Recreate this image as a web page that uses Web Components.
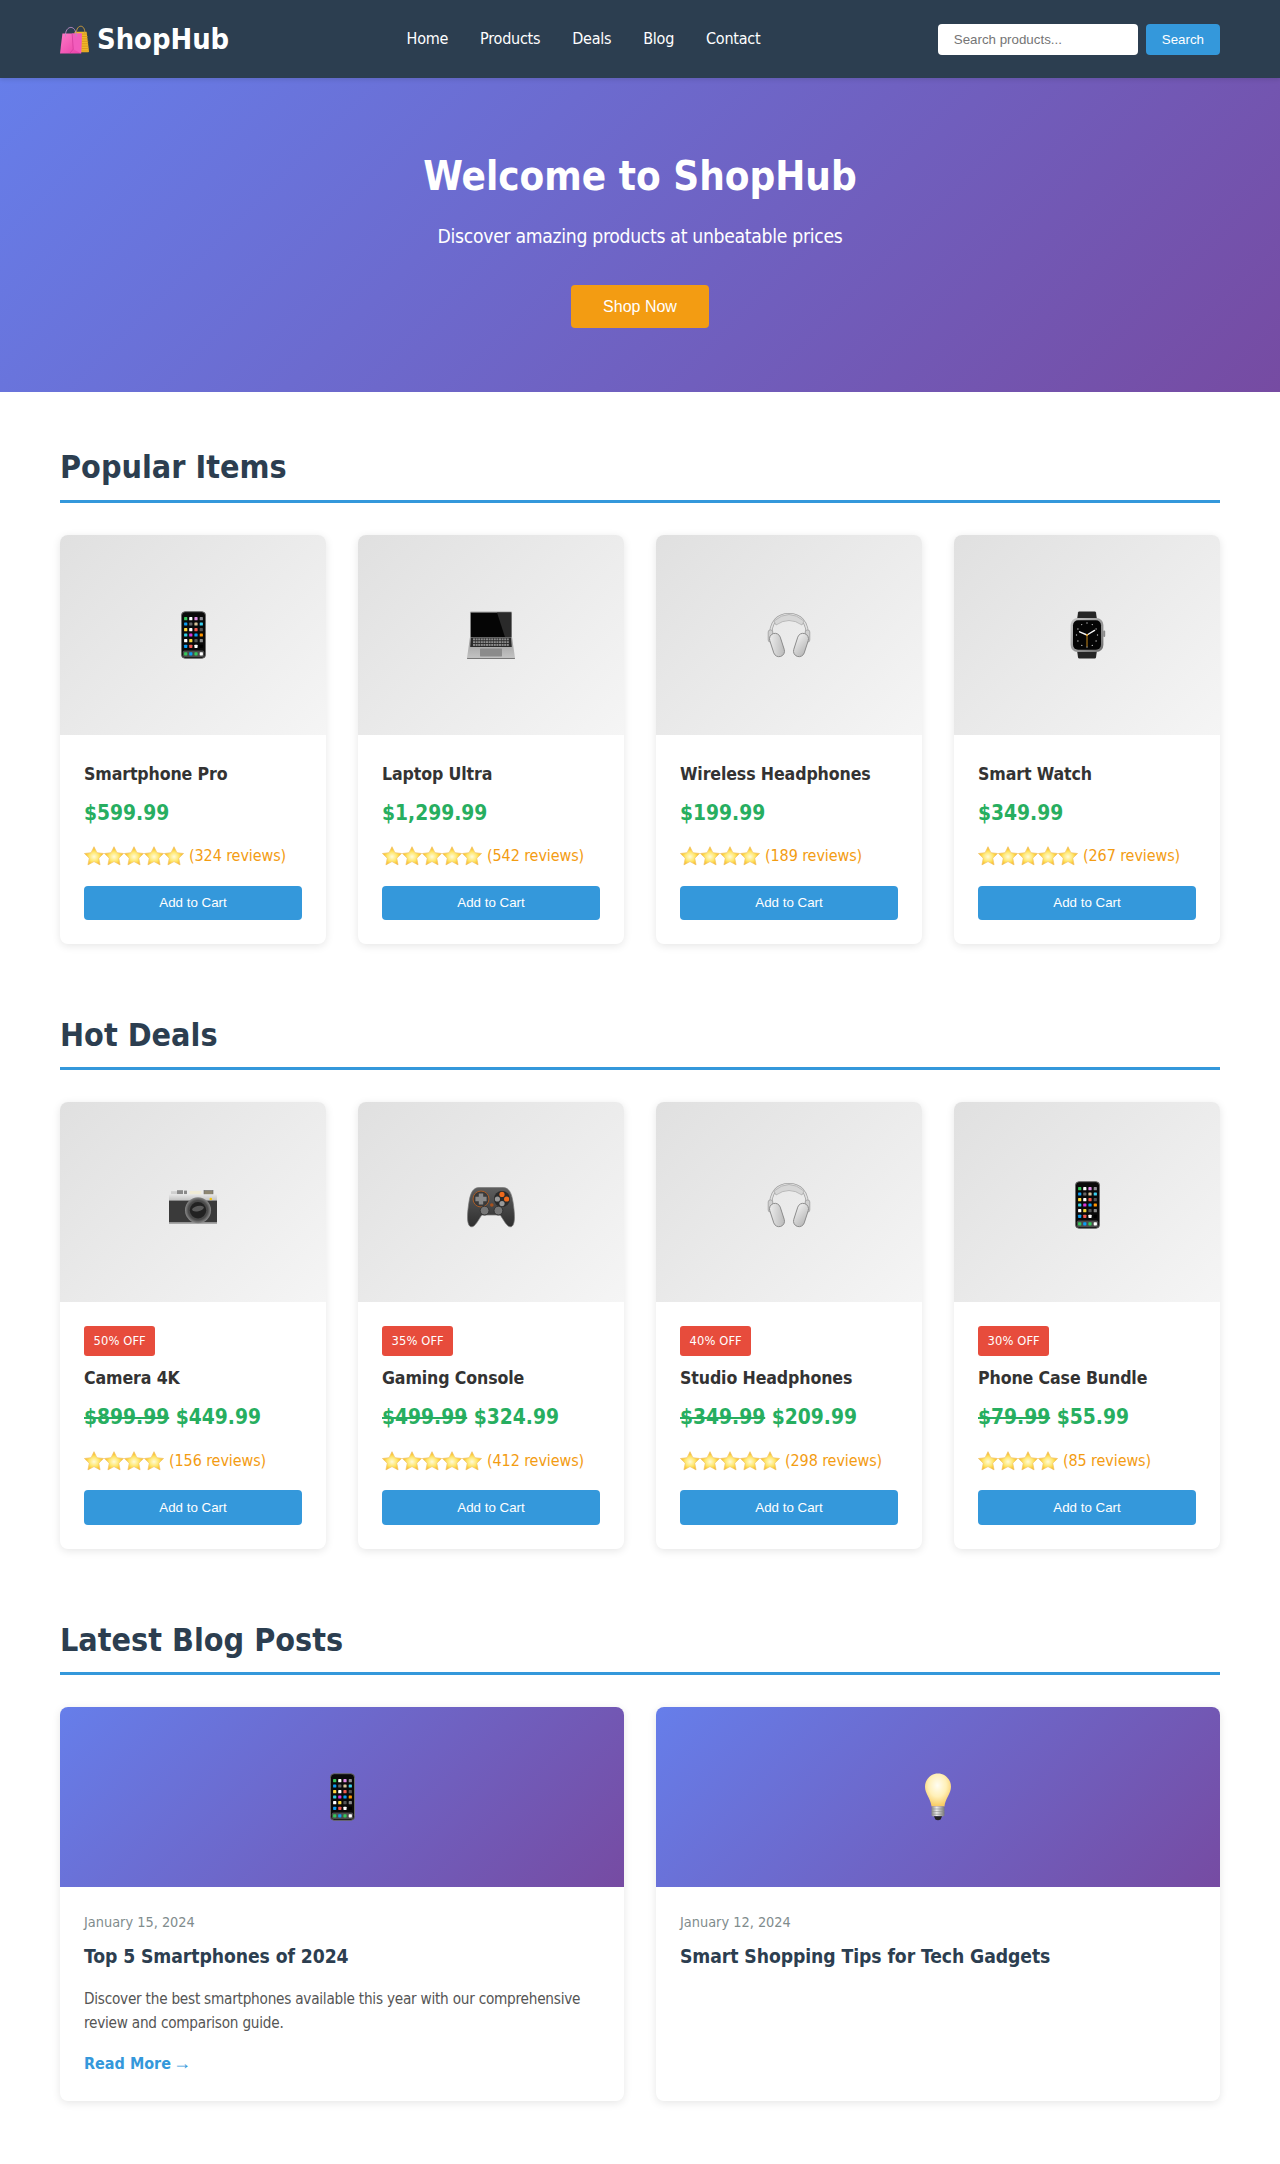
<!DOCTYPE html>
<html lang="en">
<head>
<meta charset="utf-8">
<title>ShopHub</title>
<style>
  * { box-sizing: border-box; }
  html, body { margin: 0; padding: 0; }
  body {
    font-family: "DejaVu Sans Condensed", "DejaVu Sans", Tahoma, sans-serif;
    font-stretch: condensed;
    line-height: 1.6;
    color: #333;
    background: #fff;
  }
</style>
</head>
<body>
<site-header></site-header>
<hero-banner></hero-banner>
<main style="display:block;padding:48px 60px 0">
  <shop-section title="Popular Items">
    <product-card emoji="phone" name="Smartphone Pro" price="$599.99" stars="5" reviews="324"></product-card>
    <product-card emoji="laptop" name="Laptop Ultra" price="$1,299.99" stars="5" reviews="542"></product-card>
    <product-card emoji="headphones" name="Wireless Headphones" price="$199.99" stars="4" reviews="189"></product-card>
    <product-card emoji="watch" name="Smart Watch" price="$349.99" stars="5" reviews="267"></product-card>
  </shop-section>
  <shop-section title="Hot Deals">
    <product-card emoji="camera" name="Camera 4K" old="$899.99" price="$449.99" stars="4" reviews="156" badge="50% OFF"></product-card>
    <product-card emoji="gamepad" name="Gaming Console" old="$499.99" price="$324.99" stars="5" reviews="412" badge="35% OFF"></product-card>
    <product-card emoji="headphones" name="Studio Headphones" old="$349.99" price="$209.99" stars="5" reviews="298" badge="40% OFF"></product-card>
    <product-card emoji="phone" name="Phone Case Bundle" old="$79.99" price="$55.99" stars="4" reviews="85" badge="30% OFF"></product-card>
  </shop-section>
  <shop-section title="Latest Blog Posts" columns="2">
    <blog-card emoji="phone" date="January 15, 2024" heading="Top 5 Smartphones of 2024" more="Read More">Discover the best smartphones available this year with our comprehensive review and comparison guide.</blog-card>
    <blog-card emoji="bulb" date="January 12, 2024" heading="Smart Shopping Tips for Tech Gadgets"></blog-card>
  </shop-section>
</main>

<script>
// phone icons, row by row, the last row is the dock
const phoneRows = [
  ['#34c759', '#fff', '#e08be6', '#8e8e93'],
  ['#0a9df5', '#666', '#d8c39a', '#3ad0f0'],
  ['#ffd83b', '#fff', '#ef5a4e', '#555'],
  ['#30cfe6', '#d936d9', '#0a9df5', '#ff9500'],
  ['#fff', '#f4d53a', '#555', '#888'],
  ['#0a9df5', '#f0584e', '#fff', '#000'],
];
const phoneCols = [4.7, 9.8, 15, 20.3];
const phoneYs = [7.7, 13, 18.7, 24, 29.7, 35.3];

function phoneIcons() {
  let out = '';
  phoneRows.forEach((row, r) => row.forEach((c, i) => {
    out += `<rect x="${phoneCols[i] - 1.6}" y="${phoneYs[r] - 1.6}" width="3.2" height="3.2" rx=".6" fill="${c}"/>`;
  }));
  ['#34c759', '#0a9df5', '#34c759', '#fff'].forEach((c, i) => {
    out += `<rect x="${phoneCols[i] - 1.6}" y="41.2" width="3.2" height="3.2" rx=".6" fill="${c}"/>`;
  });
  return out;
}

function keyRows() {
  let out = '';
  [27.4, 30.2, 33].forEach(y => {
    for (let x = 6; x < 41; x += 2.6) out += `<rect x="${x}" y="${y}" width="2" height="1.9" fill="#8c8c8c"/>`;
  });
  return out;
}

function watchMarks() {
  let out = '';
  for (let i = 0; i < 12; i++) {
    const a = i * Math.PI / 6;
    const x = 24 + Math.sin(a) * 10.5;
    const y = 24 - Math.cos(a) * 12;
    out += `<circle cx="${x.toFixed(1)}" cy="${y.toFixed(1)}" r=".7" fill="#bdbdbd"/>`;
  }
  return out;
}

const EMOJI = {
  phone: `<g transform="translate(12 0)">
      <rect x=".5" y=".7" width="24" height="46.6" rx="3.6" fill="#0a0a0a" stroke="#6a6a6a" stroke-width="1"/>
      <rect x="1.8" y="39.6" width="21.4" height="6.4" rx="1.6" fill="#4a4a4a"/>
      ${phoneIcons()}
    </g>`,
  laptop: `<defs><linearGradient id="b" x1="0" y1="0" x2="0" y2="1"><stop offset="0" stop-color="#9a9a9a"/><stop offset="1" stop-color="#c4c4c4"/></linearGradient></defs>
    <path d="M3 1.5Q3 .6 4 .6H44Q45 .6 45 1.5V26H3Z" fill="#a5a5a5"/>
    <rect x="3.8" y="1.6" width="40.4" height="24.6" fill="#050505"/>
    <path d="M30 1.6H44.2V26.2H38Z" fill="#2a2a2a"/>
    <path d="M3 26H45L48 47Q48 48 47 48H1Q0 48 0 47Z" fill="url(#b)"/>
    <path d="M4 26.6H44L44.8 36H3.2Z" fill="#2a2a2a"/>
    ${keyRows()}
    <rect x="13" y="37.4" width="22" height="8" rx=".6" fill="#8b8b8b"/>
    <rect x="0" y="47" width="48" height="1" rx=".5" fill="#777"/>`,
  headphones: `<defs><linearGradient id="c" x1="0" y1="0" x2="1" y2="1"><stop offset="0" stop-color="#f2f2f2"/><stop offset="1" stop-color="#b4b4b4"/></linearGradient></defs>
    <path d="M6 28C4 10 14 3.6 24 3.6S44 10 42 28" fill="none" stroke="#a2a2a2" stroke-width="3"/>
    <path d="M6 28C4 10 14 3.6 24 3.6S44 10 42 28" fill="none" stroke="#e0e0e0" stroke-width="1.6"/>
    <path d="M9 10Q24 -3 39 10L37 14Q24 5 11 14Z" fill="#d6d6d6" stroke="#a8a8a8" stroke-width=".7"/>
    <rect x="3.2" y="19" width="4.6" height="12" rx="2" fill="#cfcfcf" stroke="#979797" stroke-width=".7"/>
    <rect x="40.2" y="19" width="4.6" height="12" rx="2" fill="#cfcfcf" stroke="#979797" stroke-width=".7"/>
    <g transform="rotate(-18 12 34)"><rect x="6.5" y="22" width="11" height="24" rx="5.5" fill="url(#c)" stroke="#8a8a8a" stroke-width=".9"/></g>
    <g transform="rotate(18 36 34)"><rect x="30.5" y="22" width="11" height="24" rx="5.5" fill="url(#c)" stroke="#8a8a8a" stroke-width=".9"/></g>`,
  watch: `<defs><linearGradient id="w" x1="0" y1="0" x2="1" y2="1"><stop offset="0" stop-color="#c8c8c8"/><stop offset="1" stop-color="#6e6e6e"/></linearGradient></defs>
    <path d="M14 9L15 1.5Q15.2 .4 16.4 .4H31.6Q32.8 .4 33 1.5L34 9Z" fill="#262626"/>
    <path d="M14 39L15 46.5Q15.2 47.6 16.4 47.6H31.6Q32.8 47.6 33 46.5L34 39Z" fill="#262626"/>
    <rect x="7.6" y="7" width="32.8" height="34" rx="7" fill="url(#w)"/>
    <rect x="40.2" y="19.6" width="2" height="6.4" rx=".9" fill="#8a8a8a"/>
    <rect x="10" y="9.2" width="28" height="29.6" rx="5" fill="#050505"/>
    ${watchMarks()}
    <path d="M24 24L16.6 20.8M24 24L31.6 19.4" stroke="#f4f4f4" stroke-width="1.4" stroke-linecap="round"/>
    <path d="M24 24V35.6" stroke="#c98a1a" stroke-width="1"/>
    <circle cx="24" cy="24" r="1.1" fill="#e0a030"/>`,
  camera: `<defs><linearGradient id="t" x1="0" y1="0" x2="0" y2="1"><stop offset="0" stop-color="#e8e8e8"/><stop offset="1" stop-color="#bdbdbd"/></linearGradient>
      <radialGradient id="l" cx=".5" cy=".5" r=".5"><stop offset="0" stop-color="#333"/><stop offset=".75" stop-color="#4c4c4c"/><stop offset="1" stop-color="#8a8a8a"/></radialGradient></defs>
    <g transform="translate(0 -2.4)">
    <rect x="2" y="12.6" width="6" height="3" fill="#cfcfcf"/>
    <rect x="8" y="11.6" width="6" height="4" fill="#8a8a8a"/>
    <rect x="15" y="12" width="3" height="3.6" fill="#8a8a8a"/>
    <rect x="20.6" y="12.4" width="11.6" height="4" rx=".4" fill="#f1ecd6"/>
    <rect x="35" y="12" width="9" height="7" fill="#8d8672" stroke="#666" stroke-width=".6"/>
    <rect x="0" y="15.6" width="48" height="7" fill="url(#t)"/>
    <rect x="0" y="22" width="48" height="22" fill="#3a3a3a"/>
    <rect x="0" y="43.6" width="48" height="1.6" fill="#9a9a9a"/>
    <circle cx="29" cy="31.6" r="13" fill="url(#l)"/>
    <circle cx="29" cy="31.6" r="8.2" fill="#222"/>
    <ellipse cx="29" cy="30" rx="6" ry="2.6" fill="#5a5a5a" transform="rotate(-12 29 30)"/>
    <circle cx="41.8" cy="20.4" r="1.3" fill="#f4c20d"/>
    </g>`,
  gamepad: `<defs><linearGradient id="g" x1="0" y1="0" x2="0" y2="1"><stop offset="0" stop-color="#5e5e5e"/><stop offset="1" stop-color="#2e2e2e"/></linearGradient></defs>
    <g transform="translate(0 -3)">
    <path d="M12 9.6H36C42 9.6 44.6 15 46 24S49 46 44.6 48.6C40 50.6 36 40 33 37H15C12 40 8 50.6 3.4 48.6C-1 46 .6 33 2 24S6 9.6 12 9.6Z" fill="url(#g)" stroke="#777" stroke-width=".7"/>
    <circle cx="14" cy="21" r="8" fill="#3a3a3a" stroke="#a85c28" stroke-width="1"/>
    <path d="M11.8 15.4H16.2V18.8H19.6V23.2H16.2V26.6H11.8V23.2H8.4V18.8H11.8Z" fill="#8a8a8a"/>
    <circle cx="35" cy="21" r="8" fill="#2a2a2a"/>
    <circle cx="35" cy="16.4" r="2.6" fill="#f06a1c"/>
    <circle cx="39.6" cy="21" r="2.6" fill="#f06a1c"/>
    <circle cx="30.4" cy="21" r="2.6" fill="#999"/>
    <circle cx="35" cy="25.6" r="2.6" fill="#999"/>
    <circle cx="24.8" cy="27" r="1.8" fill="#a8521e"/>
    <circle cx="17.6" cy="32.6" r="4.4" fill="#777" stroke="#333" stroke-width="1"/>
    <circle cx="31.4" cy="32.6" r="4.4" fill="#777" stroke="#333" stroke-width="1"/>
    </g>`,
  bulb: `<defs><radialGradient id="h" cx=".48" cy=".36" r=".62"><stop offset="0" stop-color="#fffdf2"/><stop offset=".55" stop-color="#fff0b8"/><stop offset="1" stop-color="#f8cc66"/></radialGradient>
      <linearGradient id="s" x1="0" y1="0" x2="1" y2="0"><stop offset="0" stop-color="#888"/><stop offset=".4" stop-color="#eee"/><stop offset="1" stop-color="#777"/></linearGradient></defs>
    <path d="M24 .4C16.6 .4 11 6.6 11 13.8C11 21 16.4 24.6 17.6 33.6H30.4C31.6 24.6 37 21 37 13.8C37 6.6 31.4 .4 24 .4Z" fill="url(#h)"/>
    <rect x="17.6" y="33.6" width="12.8" height="9.6" rx="1" fill="url(#s)"/>
    <path d="M17.6 36H30.4M17.6 38.6H30.4M17.6 41.2H30.4" stroke="#8a8a8a" stroke-width=".6"/>
    <path d="M20 43.2H28L26.6 46.4Q24 48 21.4 46.4Z" fill="#222"/>`,
  bags: `<defs><linearGradient id="p" x1="0" y1="0" x2="1" y2="1"><stop offset="0" stop-color="#ff79c6"/><stop offset="1" stop-color="#e83ea8"/></linearGradient></defs>
    <path d="M24 11H44L48 44Q48 45 46.6 45H24Z" fill="#f0b92a"/>
    <path d="M36 15H45M36 19H46M36 23H46M36 27H47M36 31H47M36 35H47M36 39H48M36 43H48" stroke="#d08a18" stroke-width="1.1"/>
    <path d="M27 14C27 -2 42 -2 41 14" fill="none" stroke="#c99a3c" stroke-width="1.6"/>
    <path d="M4 14H36L35 47H0Z" fill="url(#p)"/>
    <path d="M20 14L22 40L35 47L36 14Z" fill="#f25cbc"/>
    <path d="M20 14L22 40L16 47" fill="none" stroke="#c62f8c" stroke-width=".9"/>
    <path d="M9 19C8 0 27 -2 27 19" fill="none" stroke="#b98ac2" stroke-width="1.6"/>`,
  star: `<defs><radialGradient id="st" cx=".5" cy=".55" r=".55"><stop offset="0" stop-color="#fffbd8"/><stop offset=".5" stop-color="#ffe566"/><stop offset="1" stop-color="#f6a90a"/></radialGradient></defs>
    <path d="M24 1.6L31 16L47 18L35.4 29.2L38.6 45.4L24 37.4L9.4 45.4L12.6 29.2L1 18L17 16Z" fill="url(#st)" stroke="#f0c36a" stroke-width="1.6" stroke-linejoin="round"/>`,
};

class ShopEmoji extends HTMLElement {
  connectedCallback() {
    const root = this.attachShadow({ mode: 'open' });
    const size = this.getAttribute('size') || 48;
    root.innerHTML = `
      <style>
        :host { display: block; flex: none; width: ${size}px; height: ${size}px; }
        svg { display: block; width: 100%; height: 100%; overflow: visible; }
      </style>
      <svg viewBox="0 0 48 48" aria-hidden="true">${EMOJI[this.getAttribute('name')]}</svg>`;
  }
}

class SiteHeader extends HTMLElement {
  connectedCallback() {
    const root = this.attachShadow({ mode: 'open' });
    root.innerHTML = `
      <style>
        :host {
          display: flex;
          position: relative;
          z-index: 2;
          align-items: center;
          justify-content: space-between;
          padding: 16px 60px;
          background: #2c3e50;
          color: #fff;
          box-shadow: 0 2px 4px rgba(0, 0, 0, 0.1);
        }
        .logo { display: flex; align-items: center; gap: 8px; font-size: 28.8px; font-weight: 700; }
        nav { display: flex; gap: 32px; font-size: 16px; letter-spacing: -0.25px; }
        nav a { color: #fff; text-decoration: none; }
        form { display: flex; gap: 8px; margin: 0; }
        input, button { border: 0; border-radius: 4px; font: 13.33px "Liberation Sans", Arial, sans-serif; padding: 8px 16px; }
        input { box-sizing: border-box; width: 200px; background: #fff; }
        input::placeholder { color: #757575; }
        button { background: #3498db; color: #fff; }
      </style>
      <div class="logo"><shop-emoji name="bags" size="29"></shop-emoji><span>ShopHub</span></div>
      <nav>
        <a href="#">Home</a><a href="#">Products</a><a href="#">Deals</a><a href="#">Blog</a><a href="#">Contact</a>
      </nav>
      <form onsubmit="return false">
        <input type="text" placeholder="Search products...">
        <button type="submit">Search</button>
      </form>`;
  }
}

class HeroBanner extends HTMLElement {
  connectedCallback() {
    const root = this.attachShadow({ mode: 'open' });
    root.innerHTML = `
      <style>
        :host {
          display: block;
          padding: 64px 20px;
          text-align: center;
          color: #fff;
          background: linear-gradient(135deg, #667eea 0%, #764ba2 100%);
        }
        h1 { margin: 0 0 14.5px; padding-top: 1.5px; font-size: 40px; font-weight: 700; }
        p { margin: 0 0 32px; font-size: 19.2px; letter-spacing: -0.3px; }
        button {
          display: block;
          margin: 0 auto;
          padding: 12.8px 32px;
          border: 0;
          border-radius: 4px;
          background: #f39c12;
          color: #fff;
          font: 16px "Liberation Sans", Arial, sans-serif;
        }
      </style>
      <h1>Welcome to ShopHub</h1>
      <p>Discover amazing products at unbeatable prices</p>
      <button type="button">Shop Now</button>`;
  }
}

class ShopSection extends HTMLElement {
  connectedCallback() {
    const root = this.attachShadow({ mode: 'open' });
    const cols = this.getAttribute('columns') || 4;
    root.innerHTML = `
      <style>
        :host { display: block; margin-bottom: 64px; }
        h2 {
          margin: 0 0 32px;
          padding: 2px 0 6px;
          border-bottom: 3px solid #3498db;
          color: #2c3e50;
          font-size: 32px;
          font-weight: 700;
        }
        .grid { display: grid; grid-template-columns: repeat(${cols}, 1fr); gap: 32px; }
      </style>
      <h2>${this.getAttribute('title')}</h2>
      <div class="grid"><slot></slot></div>`;
  }
}

class ProductCard extends HTMLElement {
  connectedCallback() {
    const root = this.attachShadow({ mode: 'open' });
    const a = n => this.getAttribute(n);
    const badge = a('badge');
    const old = a('old');
    let stars = '';
    for (let i = 0; i < Number(a('stars')); i++) stars += '<shop-emoji name="star" size="20"></shop-emoji>';
    root.innerHTML = `
      <style>
        :host {
          display: block;
          border-radius: 8px;
          overflow: hidden;
          background: #fff;
          box-shadow: 0 2px 8px rgba(0, 0, 0, 0.1);
        }
        .image {
          display: flex;
          box-sizing: border-box;
          align-items: center;
          justify-content: center;
          height: 200px;
          background: linear-gradient(135deg, #e0e0e0 0%, #f5f5f5 100%);
        }
        .image.deal { padding-top: 6px; }
        .body { padding: 24px; }
        .badge {
          width: fit-content;
          margin-bottom: 7px;
          padding: 4.8px 9.6px;
          border-radius: 3px;
          background: #e74c3c;
          color: #fff;
          font-size: 12.8px;
          letter-spacing: 0.1px;
        }
        h3 { margin: 0 0 7px; padding-top: 1px; font-size: 17.6px; font-weight: 700; color: #333; letter-spacing: -0.12px; }
        .price { margin-bottom: 10.8px; padding-top: 2px; font-size: 20.8px; font-weight: 700; color: #27ae60; }
        .rating {
          display: flex;
          box-sizing: border-box;
          align-items: center;
          height: 29px;
          padding-top: 2px;
          margin-bottom: 16px;
          font-size: 16px;
          letter-spacing: -0.1px;
          color: #f39c12;
        }
        .rating span { margin-left: 5px; }
        button {
          display: block;
          width: 100%;
          padding: 9.2px 9.6px 10px;
          border: 0;
          border-radius: 4px;
          background: #3498db;
          color: #fff;
          font: 13.33px "Liberation Sans", Arial, sans-serif;
        }
      </style>
      <div class="image ${badge ? 'deal' : ''}"><shop-emoji name="${a('emoji')}"></shop-emoji></div>
      <div class="body">
        ${badge ? `<div class="badge">${badge}</div>` : ''}
        <h3>${a('name')}</h3>
        <div class="price">${old ? `<s>${old}</s> ` : ''}${a('price')}</div>
        <div class="rating">${stars}<span>(${a('reviews')} reviews)</span></div>
        <button type="button">Add to Cart</button>
      </div>`;
  }
}

class BlogCard extends HTMLElement {
  connectedCallback() {
    const root = this.attachShadow({ mode: 'open' });
    const a = n => this.getAttribute(n);
    root.innerHTML = `
      <style>
        :host {
          display: block;
          border-radius: 8px;
          overflow: hidden;
          background: #fff;
          box-shadow: 0 2px 8px rgba(0, 0, 0, 0.1);
        }
        .image {
          display: flex;
          align-items: center;
          justify-content: center;
          height: 180px;
          background: linear-gradient(135deg, #667eea 0%, #764ba2 100%);
        }
        .body { padding: 24px; }
        .date { margin-bottom: 8px; font-size: 14.4px; color: #7f8c8d; }
        h3 { margin: 0 0 14px; font-size: 19.2px; font-weight: 700; color: #2c3e50; letter-spacing: -0.08px; }
        p { margin: 0 0 16px; font-size: 15.2px; letter-spacing: -0.24px; color: #555; }
        a { color: #3498db; font-weight: 700; text-decoration: none; }
        a span { margin-left: -3px; font-family: "Liberation Sans", Arial, sans-serif; font-size: 18px; line-height: 1; font-weight: 400; }
      </style>
      <div class="image"><shop-emoji name="${a('emoji')}"></shop-emoji></div>
      <div class="body">
        <div class="date">${a('date')}</div>
        <h3>${a('heading')}</h3>
        ${this.textContent.trim() ? '<p><slot></slot></p>' : ''}
        ${a('more') ? `<a href="#">${a('more')} <span>→</span></a>` : ''}
      </div>`;
  }
}

customElements.define('shop-emoji', ShopEmoji);
customElements.define('site-header', SiteHeader);
customElements.define('hero-banner', HeroBanner);
customElements.define('shop-section', ShopSection);
customElements.define('product-card', ProductCard);
customElements.define('blog-card', BlogCard);
</script>
</body>
</html>
